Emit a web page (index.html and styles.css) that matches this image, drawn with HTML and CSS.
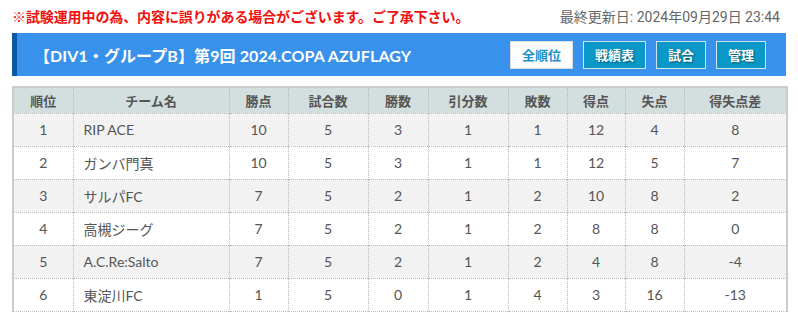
FILE: index.html
```html
<!DOCTYPE html>
<html lang="ja">
<head>
<meta charset="utf-8">
<link rel="stylesheet" href="styles.css">
</head>
<body>
<div class="page">
  <div class="topbar">
    <p class="notice">※試験運用中の為、内容に誤りがある場合がございます。ご了承下さい。</p>
    <p class="updated">最終更新日: 2024年09月29日 23:44</p>
  </div>
  <div class="head">
    <h1 class="title">【DIV1・グループB】第9回 2024.COPA AZUFLAGY</h1>
    <nav class="btns">
      <a class="btn btn-active">全順位</a>
      <a class="btn">戦績表</a>
      <a class="btn">試合</a>
      <a class="btn">管理</a>
    </nav>
  </div>
  <table class="standings">
    <colgroup>
      <col class="c60"><col class="c156"><col class="c59"><col class="c80"><col class="c60"><col class="c80"><col class="c59"><col class="c58"><col class="c59"><col class="c103">
    </colgroup>
    <thead>
      <tr><th>順位</th><th>チーム名</th><th>勝点</th><th>試合数</th><th>勝数</th><th>引分数</th><th>敗数</th><th>得点</th><th>失点</th><th>得失点差</th></tr>
    </thead>
    <tbody>
      <tr><td>1</td><td class="name">RIP ACE</td><td>10</td><td>5</td><td>3</td><td>1</td><td>1</td><td>12</td><td>4</td><td>8</td></tr>
      <tr><td>2</td><td class="name">ガンバ門真</td><td>10</td><td>5</td><td>3</td><td>1</td><td>1</td><td>12</td><td>5</td><td>7</td></tr>
      <tr><td>3</td><td class="name">サルパFC</td><td>7</td><td>5</td><td>2</td><td>1</td><td>2</td><td>10</td><td>8</td><td>2</td></tr>
      <tr><td>4</td><td class="name">高槻ジーグ</td><td>7</td><td>5</td><td>2</td><td>1</td><td>2</td><td>8</td><td>8</td><td>0</td></tr>
      <tr><td>5</td><td class="name">A.C.Re:Salto</td><td>7</td><td>5</td><td>2</td><td>1</td><td>2</td><td>4</td><td>8</td><td>-4</td></tr>
      <tr><td>6</td><td class="name">東淀川FC</td><td>1</td><td>5</td><td>0</td><td>1</td><td>4</td><td>3</td><td>16</td><td>-13</td></tr>
    </tbody>
  </table>
</div>
</body>
</html>
```
FILE: styles.css
```css
* { box-sizing: border-box; }
html, body { margin: 0; padding: 0; background: #fff; }
body {
  font-family: Lato, "Noto Sans CJK JP", sans-serif;
  color: #555;
}
.page { padding: 0 12px; }
.topbar {
  height: 33px;
  display: flex;
  justify-content: space-between;
  align-items: center;
  padding-bottom: 1px;
}
.notice {
  margin: 0;
  color: #f01010;
  font-weight: bold;
  font-size: 14px;
  font-family: "Noto Sans CJK JP", sans-serif;
  letter-spacing: -0.1px;
}
.updated {
  margin: 0 6px 0 0;
  color: #666;
  font-size: 14px;
  font-family: Roboto, "Noto Sans CJK JP", sans-serif;
}
.head {
  height: 43px;
  background: #3891ea;
  border-left: 5px solid #0c58a6;
  display: flex;
  align-items: center;
  justify-content: space-between;
  padding: 0 20px 0 17px;
}
.title {
  margin: 0;
  color: #fff;
  font-size: 16px;
  font-weight: bold;
  letter-spacing: 0.1px;
}
.btns { display: flex; gap: 10px; }
.btn {
  display: flex;
  align-items: center;
  justify-content: center;
  height: 28px;
  padding: 0 11px;
  background: #0998c8;
  border: 1px solid #cfe6f2;
  color: #fff;
  font-size: 13px;
  font-weight: bold;
  text-shadow: 1px 1px 2px rgba(0,0,0,0.45);
  font-family: "Noto Sans CJK JP", sans-serif;
}
.btn-active {
  background: #fff;
  color: #1a8fc8;
  border-color: #ddd;
  text-shadow: none;
}
.standings {
  margin-top: 10px;
  width: 774px;
  table-layout: fixed;
  border-collapse: collapse;
  border: 2px solid #ccc;
  border-bottom: 1px dotted #bbb;
  font-size: 14px;
}
.c60 { width: 60px; }
.c156 { width: 156px; }
.c59 { width: 59px; }
.c80 { width: 80px; }
.c58 { width: 58px; }
.c103 { width: 103px; }
.standings th {
  height: 26px;
  background: #d3dfdf;
  color: #555;
  font-weight: bold;
  border-left: 1px dotted #bbb;
  border-top: 2px solid #ccc;
  padding: 0;
  font-family: "Noto Sans CJK JP", sans-serif;
  font-size: 13px;
}
.standings td {
  height: 33px;
  text-align: center;
  border-left: 1px dotted #bbb;
  border-top: 1px dotted #bbb;
  padding: 0;
}
.standings tbody tr:nth-child(odd) td { background: #f2f2f2; }
.standings td.name { text-align: left; padding-left: 10px; }
```
